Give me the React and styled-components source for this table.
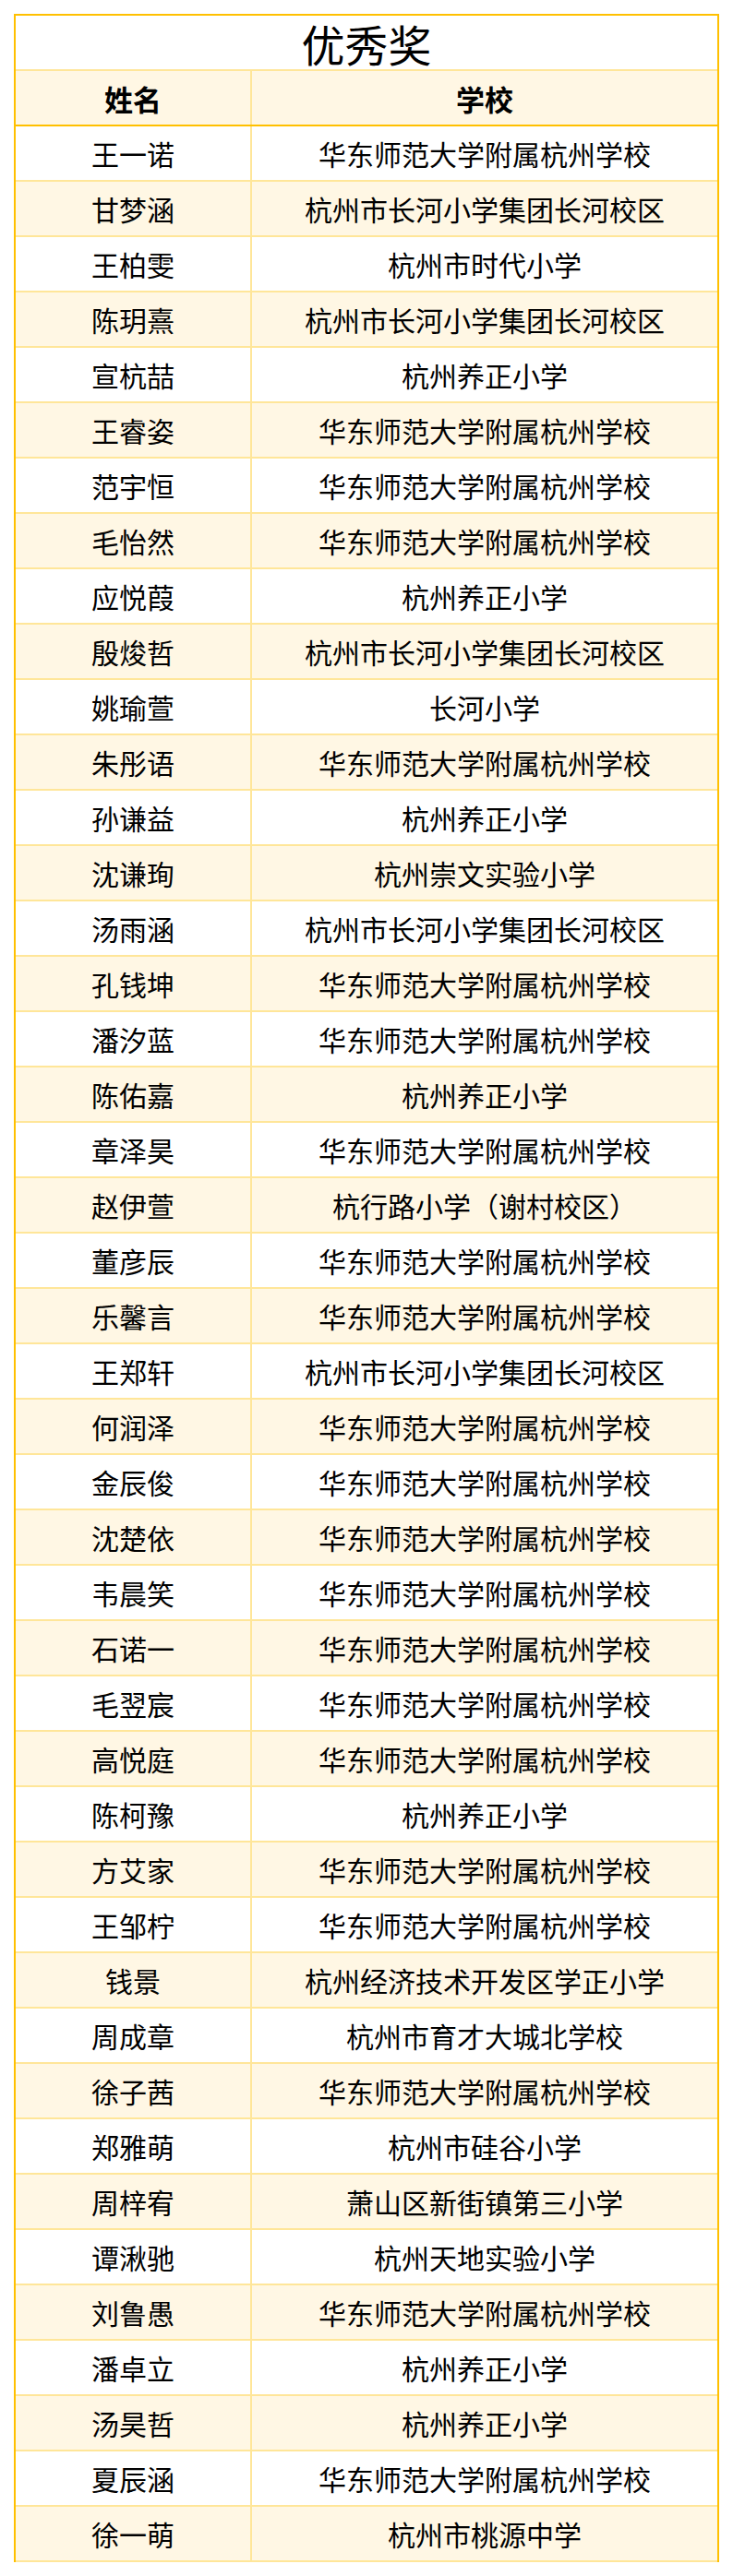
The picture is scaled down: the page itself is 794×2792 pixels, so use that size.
import React from "react";
import styled, { createGlobalStyle } from "styled-components";

const rows = [
  ["王一诺", "华东师范大学附属杭州学校"],
  ["甘梦涵", "杭州市长河小学集团长河校区"],
  ["王柏雯", "杭州市时代小学"],
  ["陈玥熹", "杭州市长河小学集团长河校区"],
  ["宣杭喆", "杭州养正小学"],
  ["王睿姿", "华东师范大学附属杭州学校"],
  ["范宇恒", "华东师范大学附属杭州学校"],
  ["毛怡然", "华东师范大学附属杭州学校"],
  ["应悦葭", "杭州养正小学"],
  ["殷焌哲", "杭州市长河小学集团长河校区"],
  ["姚瑜萱", "长河小学"],
  ["朱彤语", "华东师范大学附属杭州学校"],
  ["孙谦益", "杭州养正小学"],
  ["沈谦珣", "杭州崇文实验小学"],
  ["汤雨涵", "杭州市长河小学集团长河校区"],
  ["孔钱坤", "华东师范大学附属杭州学校"],
  ["潘汐蓝", "华东师范大学附属杭州学校"],
  ["陈佑嘉", "杭州养正小学"],
  ["章泽昊", "华东师范大学附属杭州学校"],
  ["赵伊萱", "杭行路小学（谢村校区）"],
  ["董彦辰", "华东师范大学附属杭州学校"],
  ["乐馨言", "华东师范大学附属杭州学校"],
  ["王郑轩", "杭州市长河小学集团长河校区"],
  ["何润泽", "华东师范大学附属杭州学校"],
  ["金辰俊", "华东师范大学附属杭州学校"],
  ["沈楚依", "华东师范大学附属杭州学校"],
  ["韦晨笑", "华东师范大学附属杭州学校"],
  ["石诺一", "华东师范大学附属杭州学校"],
  ["毛翌宸", "华东师范大学附属杭州学校"],
  ["高悦庭", "华东师范大学附属杭州学校"],
  ["陈柯豫", "杭州养正小学"],
  ["方艾家", "华东师范大学附属杭州学校"],
  ["王邹柠", "华东师范大学附属杭州学校"],
  ["钱景", "杭州经济技术开发区学正小学"],
  ["周成章", "杭州市育才大城北学校"],
  ["徐子茜", "华东师范大学附属杭州学校"],
  ["郑雅萌", "杭州市硅谷小学"],
  ["周梓宥", "萧山区新街镇第三小学"],
  ["谭湫驰", "杭州天地实验小学"],
  ["刘鲁愚", "华东师范大学附属杭州学校"],
  ["潘卓立", "杭州养正小学"],
  ["汤昊哲", "杭州养正小学"],
  ["夏辰涵", "华东师范大学附属杭州学校"],
  ["徐一萌", "杭州市桃源中学"],
];

const GlobalStyle = createGlobalStyle`
body {
  margin: 0;
  background: #fff;
  font-family: "Noto Sans CJK SC", "Noto Sans", sans-serif;
  color: #000;
}
`;

const Page = styled.div`
padding: 15px 0 16px 15px;
`;

const Table = styled.div`
width: 764px;
box-sizing: border-box;
border: 2px solid #ffc000;
border-bottom: none;
`;

const Title = styled.div`
height: 58px;
border-bottom: 2px solid #ffe699;
display: flex;
align-items: center;
justify-content: center;
font-size: 47px;
line-height: 1;
`;

const Row = styled.div`
display: grid;
grid-template-columns: 254px 1fr;
height: 58px;
background: ${(p) => (p.$shaded ? "#fff7e4" : "#fff")};
border-bottom: 2px solid ${(p) => (p.$head ? "#ffc000" : "#ffe699")};
`;

const Cell = styled.div`
display: flex;
align-items: center;
justify-content: center;
font-size: ${(p) => (p.$head ? "31px" : "30px")};
font-weight: ${(p) => (p.$head ? 700 : 400)};
line-height: 1;
white-space: nowrap;
& + & {
  border-left: 2px solid #ffe699;
}
`;

export default function App() {
  return (
    <>
      <GlobalStyle />
      <Page>
        <Table>
          <Title>优秀奖</Title>
          <Row $head $shaded>
            <Cell $head>姓名</Cell>
            <Cell $head>学校</Cell>
          </Row>
          {rows.map(([name, school], i) => (
            <Row key={name + i} $shaded={i % 2 === 1}>
              <Cell>{name}</Cell>
              <Cell>{school}</Cell>
            </Row>
          ))}
        </Table>
      </Page>
    </>
  );
}
